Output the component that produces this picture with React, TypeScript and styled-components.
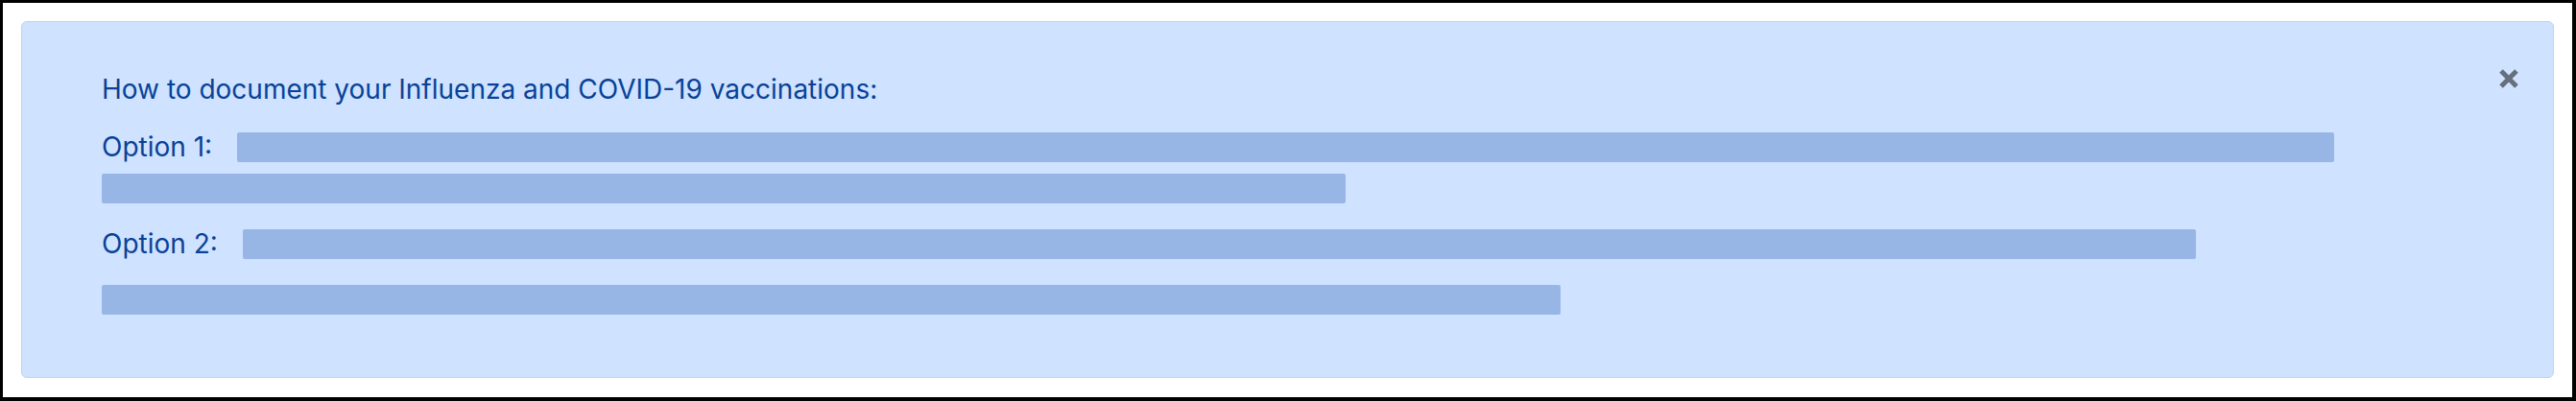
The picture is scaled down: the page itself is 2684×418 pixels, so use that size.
import React from "react";
import styled, { createGlobalStyle } from "styled-components";

const GlobalStyle = createGlobalStyle`
    html, body {
        margin: 0;
        padding: 0;
        background: #ffffff;
    }
    * {
        box-sizing: border-box;
    }
`;

type OptionItem = {
    label: string;
    first: number;
    rest: number;
    restGap: number;
};

const options: OptionItem[] = [
    { label: "Option 1:", first: 2185, rest: 1296, restGap: 12 },
    { label: "Option 2:", first: 2035, rest: 1520, restGap: 27 },
];

const CloseIcon = () => (
    <svg width="22" height="22" viewBox="0 0 22 22" aria-hidden="true">
        <path
            d="M3 3 L19 19 M19 3 L3 19"
            stroke="currentColor"
            strokeWidth="5"
            strokeLinecap="butt"
            fill="none"
        />
    </svg>
);

export default function App() {
    return (
        <>
            <GlobalStyle />
            <Frame>
                <Alert role="alert">
                    <Content>
                        <Heading>How to document your Influenza and COVID-19 vaccinations:</Heading>
                        {options.map((opt, i) => (
                            <OptionBlock key={opt.label} $first={i === 0}>
                                <OptionRow>
                                    <OptionLabel>{opt.label}</OptionLabel>
                                    <Bar style={{ width: opt.first }} />
                                </OptionRow>
                                <Bar style={{ width: opt.rest, marginTop: opt.restGap }} />
                            </OptionBlock>
                        ))}
                    </Content>
                    <CloseButton type="button" aria-label="Close">
                        <CloseIcon />
                    </CloseButton>
                </Alert>
            </Frame>
        </>
    );
}

const Frame = styled.div`
    width: 2684px;
    height: 418px;
    border-style: solid;
    border-color: #000000;
    border-width: 3px 4px 4px 3px;
    padding: 19px 19px 20px 19px;
    display: flex;
    background: #ffffff;
`;

const Alert = styled.div`
    flex: 1;
    display: flex;
    align-items: flex-start;
    background: #cfe2ff;
    border: 1px solid #b6d4fe;
    border-radius: 6px;
    padding: 50px 35px 0 83px;
    font-family: Inter, "Liberation Sans", sans-serif;
    color: #084298;
`;

const Content = styled.div`
    flex: 1;
    display: flex;
    flex-direction: column;
`;

const Heading = styled.div`
    font-size: 28px;
    line-height: 40px;
    height: 40px;
`;

const OptionBlock = styled.div<{ $first: boolean }>`
    display: flex;
    flex-direction: column;
    margin-top: ${(p) => (p.$first ? "24px" : "26px")};
`;

const OptionRow = styled.div`
    display: flex;
    align-items: center;
    height: 32px;
`;

const OptionLabel = styled.span`
    font-size: 28px;
    line-height: 32px;
    margin-right: 26px;
    white-space: nowrap;
`;

const Bar = styled.div`
    height: 31px;
    background: #98b6e5;
    border-radius: 2px;
    flex: none;
`;

const CloseButton = styled.button`
    flex: none;
    width: 22px;
    height: 22px;
    margin-top: -2px;
    padding: 0;
    border: none;
    background: transparent;
    color: #656f7d;
    display: flex;
    align-items: center;
    justify-content: center;
    cursor: pointer;
`;
